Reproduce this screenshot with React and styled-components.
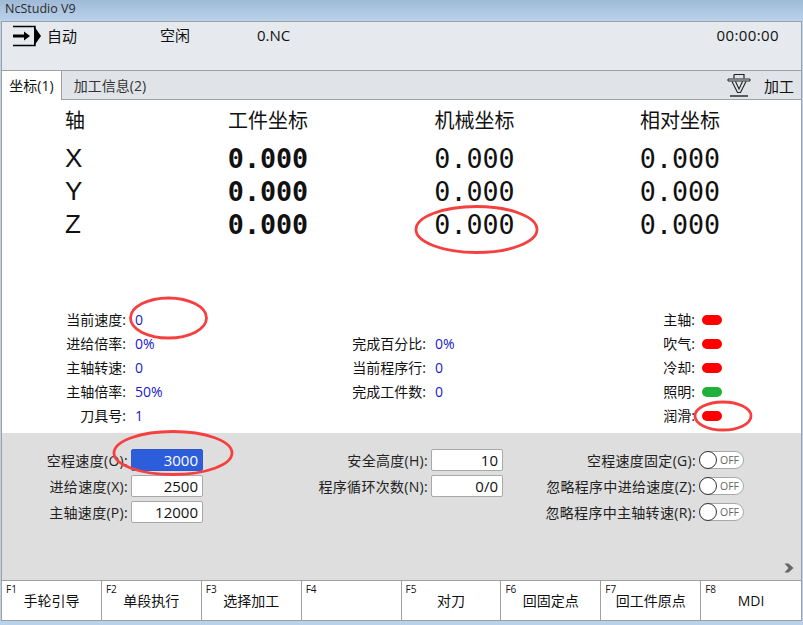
import React from 'react'
import styled, { createGlobalStyle } from 'styled-components'

const GlobalStyle = createGlobalStyle`
  html, body {
    margin: 0;
    padding: 0;
    height: 100%;
    overflow: hidden;
    background: #b9d1ea;
  }
  body {
    font-family: "Open Sans", "Noto Sans CJK SC", sans-serif;
    font-size: 14px;
    color: #111;
  }
`

const Page = styled.div`
  position: relative;
  width: 803px;
  height: 625px;
  display: flex;
  flex-direction: column;
  background: #b9d1ea;
`

const TitleBar = styled.div`
  height: 21px;
  flex: none;
  padding-left: 5px;
  line-height: 18px;
  font-size: 12.5px;
  color: #2a2a2a;
  background: linear-gradient(#9fbad6, #bad2ec);
`

const Frame = styled.div`
  flex: 1;
  margin: 0 1px 4px 1px;
  display: flex;
  flex-direction: column;
  border: 1px solid #a0a0a0;
  min-height: 0;
`

const StatusBar = styled.div`
  height: 49px;
  flex: none;
  display: grid;
  grid-template-columns: 148px 97px 1fr auto;
  align-items: start;
  padding: 3px 22px 0 10px;
  box-sizing: border-box;
  background: #e6e9ee;
  border-bottom: 1px solid #a0a0a0;
  line-height: 20px;
  font-size: 15px;
`

const ModeCell = styled.div`
  display: flex;
  align-items: center;
  gap: 5px;
`

const TimeText = styled.div`
  letter-spacing: 0.4px;
`

const TabRow = styled.div`
  height: 29px;
  flex: none;
  box-sizing: border-box;
  display: flex;
  background: #e0e3e8;
  border-bottom: 1px solid #a0a0a0;
`

const Tab = styled.div`
  width: ${p => p.$width}px;
  box-sizing: border-box;
  text-align: center;
  line-height: 30px;
  font-size: 14px;
  color: ${p => (p.$active ? '#111' : '#333')};
  background: ${p => (p.$active ? '#fff' : 'transparent')};
  border-right: ${p => (p.$active ? '1px solid #a0a0a0' : 'none')};
  height: 29px;
`

const ProcessCell = styled.div`
  margin-left: auto;
  display: flex;
  align-items: center;
  gap: 13px;
  padding-right: 7px;
  font-size: 15px;
`

const Content = styled.div`
  height: 333px;
  flex: none;
  display: flex;
  flex-direction: column;
  background: #fff;
`

const CoordGrid = styled.div`
  display: grid;
  grid-template-columns: 100px 206px 207px 204px;
  grid-template-rows: 38px repeat(3, 33px);
  padding: 4px 0 0 63px;
`

const CoordHead = styled.div`
  font-size: 20px;
  line-height: 33px;
  text-align: ${p => (p.$left ? 'left' : 'center')};
`

const AxisName = styled.div`
  font-family: "Liberation Sans", sans-serif;
  font-size: 26px;
  line-height: 33px;
`

const CoordValue = styled.div`
  font-family: "DejaVu Sans Mono", monospace;
  font-size: 26.7px;
  line-height: 33px;
  text-align: center;
  font-weight: ${p => (p.$bold ? 700 : 400)};
`

const InfoGrid = styled.div`
  margin-top: 67px;
  display: grid;
  grid-template-columns: 124px 170px 130px 237px 59px;
  grid-auto-rows: 24px;
  align-items: center;
  line-height: 24px;
`

const InfoLabel = styled.div`
  text-align: right;
  white-space: nowrap;
`

const InfoValue = styled.div`
  padding-left: 9px;
  color: #1a1ad0;
`

const LampCell = styled.div`
  display: flex;
  justify-content: flex-end;
  align-items: center;
  gap: 7px;
  white-space: nowrap;
`

const Lamp = styled.span`
  width: 20px;
  height: 10px;
  border-radius: 5px;
  flex: none;
  background: ${p => (p.$on ? '#22b03c' : '#ff0000')};
`

const ParamPanel = styled.div`
  flex: 1;
  display: flex;
  flex-direction: column;
  background: #dedede;
  border-bottom: 1px solid #a0a0a0;
  min-height: 0;
`

const ParamGrid = styled.div`
  margin-top: 14px;
  display: grid;
  grid-template-columns: 127px 74px 226px 74px 194px auto;
  grid-auto-rows: 26px;
  align-items: center;
`

const ParamLabel = styled.div`
  text-align: right;
  white-space: nowrap;
  padding-right: 1px;
  letter-spacing: 0.3px;
  color: #222;
`

const ParamInput = styled.div`
  margin-left: 2px;
  height: 22px;
  box-sizing: border-box;
  border: 1px solid ${p => (p.$selected ? '#2f58c8' : '#a8a8a8')};
  border-radius: 2px;
  background: ${p => (p.$selected ? '#2c5ddb' : '#fff')};
  color: ${p => (p.$selected ? '#fff' : '#111')};
  text-align: right;
  padding-right: 4px;
  line-height: 20px;
  font-size: 15px;
`

const Toggle = styled.div`
  width: 45px;
  height: 18px;
  margin-left: 2px;
  box-sizing: border-box;
  display: flex;
  align-items: center;
  border: 1px solid #a8a8a8;
  border-radius: 9px;
  background: #fff;
`

const Knob = styled.span`
  width: 18px;
  height: 18px;
  margin-left: -1px;
  box-sizing: border-box;
  flex: none;
  border: 1px solid #333;
  border-radius: 50%;
  background: #fff;
`

const ToggleText = styled.span`
  margin-left: 3px;
  font-family: "Open Sans", sans-serif;
  font-size: 10.5px;
  color: #666;
`

const Chevron = styled.div`
  margin-top: auto;
  align-self: flex-end;
  padding: 0 7px 7px 0;
  line-height: 0;
`

const KeyRow = styled.div`
  height: 39px;
  flex: none;
  display: flex;
  background: #fff;
`

const KeyButton = styled.div`
  width: 100px;
  box-sizing: border-box;
  padding: 2px 0 0 4px;
  border-right: ${p => (p.$last ? 'none' : '1px solid #a0a0a0')};
`

const KeyName = styled.div`
  font-family: "Open Sans", sans-serif;
  font-size: 10px;
  line-height: 13px;
`

const KeyText = styled.div`
  margin: -5px 0 0 -4px;
  text-align: center;
  font-size: 14px;
  line-height: 20px;
  white-space: nowrap;
`

const Marks = styled.svg`
  position: absolute;
  left: 0;
  top: 0;
  pointer-events: none;
`

const ModeIcon = () => (
  <svg width="30" height="22" viewBox="0 0 30 22">
    <path d="M1 1.5H23V20.5H1" fill="none" stroke="#000" strokeWidth="1.4" />
    <path d="M22 1L29 11L22 21Z" fill="#000" />
    <path d="M1 11H13" stroke="#000" strokeWidth="3" />
    <path d="M12 6.5L18 11L12 15.5Z" fill="#000" />
  </svg>
)

const SpindleIcon = () => (
  <svg width="24" height="24" viewBox="0 0 24 24">
    <path d="M7 1.5H17V5.5M7 1.5V5.5" fill="none" stroke="#222" strokeWidth="1.2" />
    <path d="M1 6H23V8H1Z" fill="none" stroke="#222" strokeWidth="1" />
    <path d="M5 8.5L10.5 19.5H13.5L19 8.5M8.5 8.5L12 16L15.5 8.5" fill="none" stroke="#222" strokeWidth="1.1" />
    <path d="M3 23H21" stroke="#111" strokeWidth="1.3" />
  </svg>
)

const axes = ['X', 'Y', 'Z']

const keys = [
  ['F1', '手轮引导'],
  ['F2', '单段执行'],
  ['F3', '选择加工'],
  ['F4', ''],
  ['F5', '对刀'],
  ['F6', '回固定点'],
  ['F7', '回工件原点'],
  ['F8', 'MDI'],
]

const info = [
  ['当前速度:', '0', '', '', '主轴:', false],
  ['进给倍率:', '0%', '完成百分比:', '0%', '吹气:', false],
  ['主轴转速:', '0', '当前程序行:', '0', '冷却:', false],
  ['主轴倍率:', '50%', '完成工件数:', '0', '照明:', true],
  ['刀具号:', '1', '', '', '润滑:', false],
]

const params = [
  ['空程速度(O):', '3000', '安全高度(H):', '10', '空程速度固定(G):'],
  ['进给速度(X):', '2500', '程序循环次数(N):', '0/0', '忽略程序中进给速度(Z):'],
  ['主轴速度(P):', '12000', '', '', '忽略程序中主轴转速(R):'],
]

export default function App() {
  return (
    <Page>
      <GlobalStyle />
      <TitleBar>NcStudio V9</TitleBar>
      <Frame>
        <StatusBar>
          <ModeCell>
            <ModeIcon />
            自动
          </ModeCell>
          <div>空闲</div>
          <div>0.NC</div>
          <TimeText>00:00:00</TimeText>
        </StatusBar>
        <TabRow>
          <Tab $width={60} $active>坐标(1)</Tab>
          <Tab $width={96}>加工信息(2)</Tab>
          <ProcessCell>
            <SpindleIcon />
            加工
          </ProcessCell>
        </TabRow>
        <Content>
          <CoordGrid>
            <CoordHead $left>轴</CoordHead>
            <CoordHead>工件坐标</CoordHead>
            <CoordHead>机械坐标</CoordHead>
            <CoordHead>相对坐标</CoordHead>
            {axes.map(axis => (
              <React.Fragment key={axis}>
                <AxisName>{axis}</AxisName>
                <CoordValue $bold>0.000</CoordValue>
                <CoordValue>0.000</CoordValue>
                <CoordValue>0.000</CoordValue>
              </React.Fragment>
            ))}
          </CoordGrid>
          <InfoGrid>
            {info.map(([label, value, label2, value2, lamp, on]) => (
              <React.Fragment key={label}>
                <InfoLabel>{label}</InfoLabel>
                <InfoValue>{value}</InfoValue>
                <InfoLabel>{label2}</InfoLabel>
                <InfoValue>{value2}</InfoValue>
                <LampCell>
                  {lamp}
                  <Lamp $on={on} />
                </LampCell>
              </React.Fragment>
            ))}
          </InfoGrid>
        </Content>
        <ParamPanel>
          <ParamGrid>
            {params.map(([label, value, label2, value2, label3], i) => (
              <React.Fragment key={label}>
                <ParamLabel>{label}</ParamLabel>
                <ParamInput $selected={i === 0}>{value}</ParamInput>
                <ParamLabel>{label2}</ParamLabel>
                {value2 ? <ParamInput>{value2}</ParamInput> : <div />}
                <ParamLabel>{label3}</ParamLabel>
                <Toggle>
                  <Knob />
                  <ToggleText>OFF</ToggleText>
                </Toggle>
              </React.Fragment>
            ))}
          </ParamGrid>
          <Chevron>
            <svg width="10" height="10" viewBox="0 0 10 10">
              <path d="M0.5 0.5H4.5L9.5 5L4.5 9.5H0.5L4.5 5Z" fill="#666" />
            </svg>
          </Chevron>
        </ParamPanel>
        <KeyRow>
          {keys.map(([name, text], i) => (
            <KeyButton key={name} $last={i === keys.length - 1}>
              <KeyName>{name}</KeyName>
              <KeyText>{text}</KeyText>
            </KeyButton>
          ))}
        </KeyRow>
      </Frame>
      <Marks width="803" height="625" viewBox="0 0 803 625">
        <g fill="none" stroke="#f64040" strokeWidth="2.8">
          <ellipse cx="476.5" cy="229.5" rx="60.5" ry="23" />
          <ellipse cx="168.5" cy="318" rx="38" ry="20" />
          <ellipse cx="173" cy="453" rx="59" ry="21.5" />
          <ellipse cx="723" cy="416" rx="28" ry="14" />
        </g>
      </Marks>
    </Page>
  )
}
